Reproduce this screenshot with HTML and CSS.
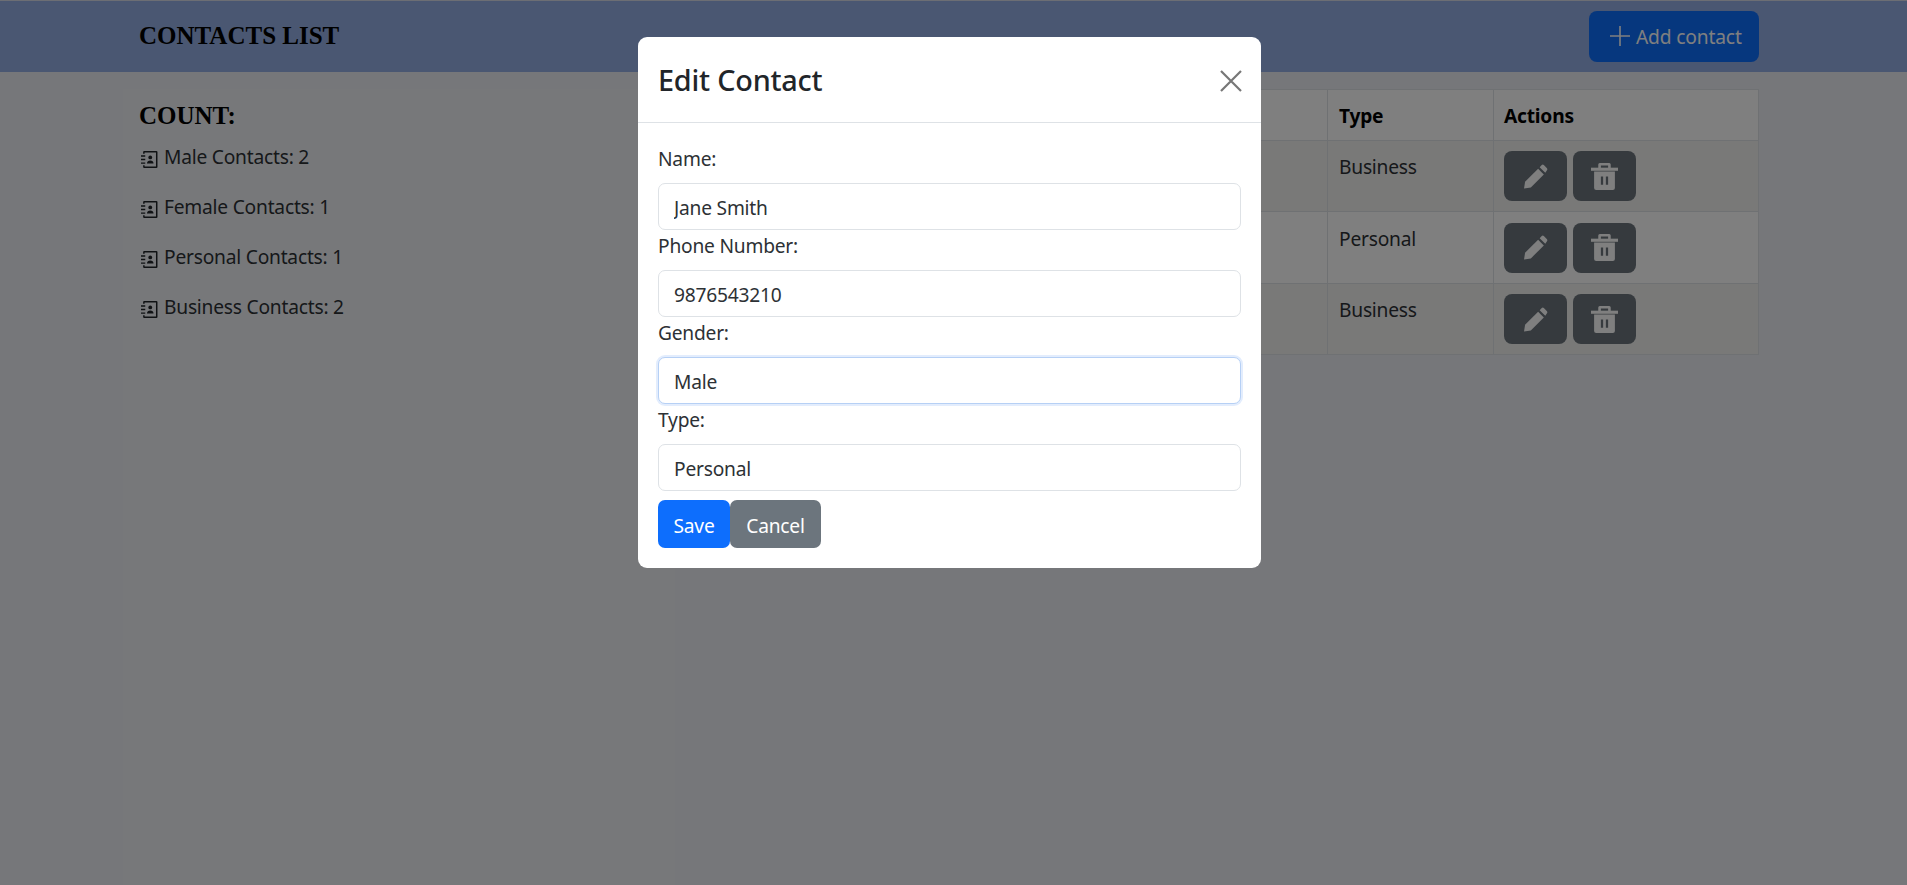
FILE: index.html

```html
<!DOCTYPE html>
<html lang="en">
<head>
  <meta charset="UTF-8" />
  <meta name="viewport" content="width=device-width, initial-scale=1.0"/>
  <title>Contacts List</title>
  <link rel="stylesheet" href="styles.css">
</head>
<body>
  <svg class="defs" width="0" height="0">
    <symbol id="book" viewBox="0 0 16 16">
      <path d="M3 0h11.500a1 1 0 0 1 1 1v14a1 1 0 0 1-1 1H3a1 1 0 0 1-1-1v-1.500h1.400v1.100h10.700V1.400H3.400v1.100H2V1a1 1 0 0 1 1-1z"/>
      <path d="M0 4h4v1.300H0zM0 7.400h4v1.300H0zM0 10.800h4v1.300H0z"/>
      <circle cx="8.700" cy="6" r="1.800"/>
      <path d="M5.600 11.800c0-1.900 1.300-2.900 3.100-2.900s3.100 1 3.100 2.900z"/>
    </symbol>
    <symbol id="pencil" viewBox="0 0 24 24">
      <path d="M1 23.500 2 17 14.500 4.500 20 10 7.500 22.500z"/>
      <path d="M16 3 18 1a1.500 1.500 0 0 1 2 0l3 3a1.500 1.500 0 0 1 0 2l-1.600 2.400z"/>
    </symbol>
    <symbol id="trash" viewBox="0 0 26 26">
      <path d="M7 5V1.500a1.500 1.500 0 0 1 1.500-1.500h9A1.500 1.500 0 0 1 19 1.500V5h-2.500V2.500h-7V5z"/>
      <path d="M0 4.500h26V7.500H0z"/>
      <path fill-rule="evenodd" d="M3 8.200h20V24a2 2 0 0 1-2 2H5a2 2 0 0 1-2-2zM9.500 13v8h2.200v-8zM14.300 13v8h2.200v-8z"/>
    </symbol>
  </svg>

  <header class="topbar">
    <h1 class="brand">CONTACTS LIST</h1>
    <button class="btn-add">
      <svg class="plus" width="20" height="20" viewBox="0 0 20 20"><path d="M10 0v20M0 10h20"/></svg>
      Add contact
    </button>
  </header>

  <main class="content">
    <aside class="sidebar">
      <h2 class="count-title">COUNT:</h2>
      <ul class="count-list">
        <li><svg class="book"><use href="#book"/></svg>Male Contacts: 2</li>
        <li><svg class="book"><use href="#book"/></svg>Female Contacts: 1</li>
        <li><svg class="book"><use href="#book"/></svg>Personal Contacts: 1</li>
        <li><svg class="book"><use href="#book"/></svg>Business Contacts: 2</li>
      </ul>
    </aside>

    <section class="table-wrap">
      <table class="contacts">
        <colgroup>
          <col class="col-name"><col class="col-phone"><col class="col-gender"><col class="col-type"><col>
        </colgroup>
        <thead>
          <tr><th></th><th></th><th></th><th>Type</th><th>Actions</th></tr>
        </thead>
        <tbody>
          <tr>
            <td></td><td></td><td></td><td>Business</td>
            <td>
              <button class="btn-icon"><svg class="i-pencil"><use href="#pencil"/></svg></button>
              <button class="btn-icon"><svg class="i-trash"><use href="#trash"/></svg></button>
            </td>
          </tr>
          <tr>
            <td></td><td></td><td></td><td>Personal</td>
            <td>
              <button class="btn-icon"><svg class="i-pencil"><use href="#pencil"/></svg></button>
              <button class="btn-icon"><svg class="i-trash"><use href="#trash"/></svg></button>
            </td>
          </tr>
          <tr>
            <td></td><td></td><td></td><td>Business</td>
            <td>
              <button class="btn-icon"><svg class="i-pencil"><use href="#pencil"/></svg></button>
              <button class="btn-icon"><svg class="i-trash"><use href="#trash"/></svg></button>
            </td>
          </tr>
        </tbody>
      </table>
    </section>
  </main>

  <div class="backdrop"></div>

  <div class="modal">
    <div class="dialog">
      <div class="dialog-head">
        <h3 class="dialog-title">Edit Contact</h3>
        <button class="btn-close" aria-label="Close">
          <svg width="22" height="22" viewBox="0 0 22 22"><path d="M1 1l20 20M21 1L1 21"/></svg>
        </button>
      </div>
      <form class="dialog-body">
        <div class="field">
          <label for="name">Name:</label>
          <input id="name" type="text" value="Jane Smith"/>
        </div>
        <div class="field">
          <label for="phone">Phone Number:</label>
          <input id="phone" type="text" value="9876543210"/>
        </div>
        <div class="field">
          <label for="gender">Gender:</label>
          <input id="gender" class="focused" type="text" value="Male"/>
        </div>
        <div class="field">
          <label for="type">Type:</label>
          <input id="type" type="text" value="Personal"/>
        </div>
        <div class="dialog-actions">
          <button type="button" class="btn-save">Save</button>
          <button type="button" class="btn-cancel">Cancel</button>
        </div>
      </form>
    </div>
  </div>
</body>
</html>
```

FILE: styles.css

```css
* {
  box-sizing: border-box;
}
body {
  margin: 0;
  height: 885px;
  overflow: hidden;
  background: #eceef4;
  color: #2d3135;
  font-family: "Noto Sans", Arial, sans-serif;
  font-size: 19.2px;
  letter-spacing: -0.22px;
  line-height: 28.8px;
}
.defs {
  position: absolute;
}
button {
  font-family: inherit;
  letter-spacing: inherit;
}

/* top bar */
.topbar {
  display: flex;
  justify-content: space-between;
  align-items: center;
  height: 72px;
  padding: 0 148px 1px 139px;
  background: #94aee4;
  border-top: 1px solid #d8dce8;
}
.brand {
  margin: 0;
  color: #000;
  font-family: "Liberation Serif", "Times New Roman", serif;
  font-size: 25px;
  letter-spacing: 0;
  font-weight: bold;
}
.btn-add {
  display: flex;
  align-items: center;
  gap: 6px;
  width: 170px;
  height: 51px;
  padding: 0 0 0 21px;
  border: none;
  border-radius: 8px;
  background: #0d6efd;
  color: #fff;
  font-size: 19.2px;
  letter-spacing: -0.15px;
}
.plus path {
  fill: none;
  stroke: #fff;
  stroke-width: 1.6;
}

/* page body */
.content {
  display: flex;
  margin-top: 17px;
  padding-left: 123px;
}
.sidebar {
  width: 552px;
  height: 796px;
  padding: 9px 16px;
  background: #eff0f5;
}
.count-title {
  width: fit-content;
  margin: 0 0 3.5px;
  color: #000;
  font-family: "Liberation Serif", "Times New Roman", serif;
  font-size: 25px;
  letter-spacing: 0;
  font-weight: bold;
  line-height: 36px;
}
.count-list {
  width: fit-content;
  margin: 0;
  padding: 0;
  list-style: none;
}
.count-list li {
  display: flex;
  align-items: center;
  height: 50px;
  margin-top: -5px;
  margin-bottom: 5px;
}
.book {
  width: 17px;
  height: 17px;
  margin: 3px 6px 0 2px;
  flex: none;
  fill: #212529;
}
.table-wrap {
  width: 1084px;
}
.contacts {
  width: 100%;
  border-collapse: collapse;
  table-layout: fixed;
  background: #fff;
}
.col-name { width: 260px; }
.col-phone { width: 220px; }
.col-gender { width: 172px; }
.col-type { width: 166px; }
.contacts th,
.contacts td {
  border: 1px solid #dee2e6;
  padding: 12.5px 11px 8px;
  text-align: left;
  vertical-align: top;
}
.contacts th {
  padding-top: 12px;
  padding-bottom: 9px;
  color: #000;
}
.contacts th:last-child {
  padding-left: 10px;
}
.contacts td:last-child {
  padding: 10.5px 10px 10px;
}
.contacts tbody tr:nth-child(odd) {
  background: #f2f2f1;
}
.btn-icon {
  display: inline-flex;
  align-items: center;
  justify-content: center;
  width: 63px;
  height: 50px;
  margin-right: 1px;
  padding: 0;
  border: none;
  border-radius: 8px;
  background: #6c757d;
  vertical-align: top;
}
.i-pencil {
  width: 25px;
  height: 25px;
  fill: #fff;
}
.i-trash {
  width: 27px;
  height: 27px;
  fill: #fff;
}

/* edit modal */
.backdrop {
  position: fixed;
  inset: 0;
  background: rgba(0, 0, 0, 0.5);
}
.modal {
  position: fixed;
  inset: 0;
  display: flex;
  justify-content: center;
  align-items: flex-start;
  padding: 37px 8px 0 0;
}
.dialog {
  width: 623px;
  border-radius: 9px;
  background: #fff;
}
.dialog-head {
  display: flex;
  justify-content: space-between;
  align-items: center;
  height: 86px;
  padding: 2px 19px 0 20px;
  border-bottom: 1px solid #dee2e6;
}
.dialog-title {
  margin: 0;
  color: #212529;
  font-size: 28.8px;
  font-weight: 500;
  letter-spacing: -0.2px;
}
.btn-close {
  display: flex;
  padding: 0;
  border: none;
  background: none;
}
.btn-close path {
  fill: none;
  stroke: #777;
  stroke-width: 2.2;
}
.dialog-body {
  padding: 22px 20px 20.5px;
}
.field {
  margin-bottom: 2.1px;
}
.field label {
  display: block;
  margin-bottom: 9.6px;
}
.field input {
  display: block;
  width: 100%;
  height: 46.5px;
  padding: 2px 15px 0;
  border: 1px solid #dee2e6;
  border-radius: 7px;
  background: #fff;
  color: #2d3135;
  font-family: inherit;
  font-size: 19.2px;
  letter-spacing: inherit;
}
.field input.focused {
  border-color: #b6d0f5;
  box-shadow: 0 0 0 2px #e3edfd;
}
.dialog-actions {
  display: flex;
  margin-top: 9.5px;
}
.btn-save,
.btn-cancel {
  height: 47.5px;
  padding: 2px 15.5px 0;
  border: none;
  border-radius: 7px;
  color: #fff;
  font-size: 19.2px;
}
.btn-save {
  width: 72px;
  background: #0d6efd;
}
.btn-cancel {
  width: 91px;
  background: #6c757d;
}
```
